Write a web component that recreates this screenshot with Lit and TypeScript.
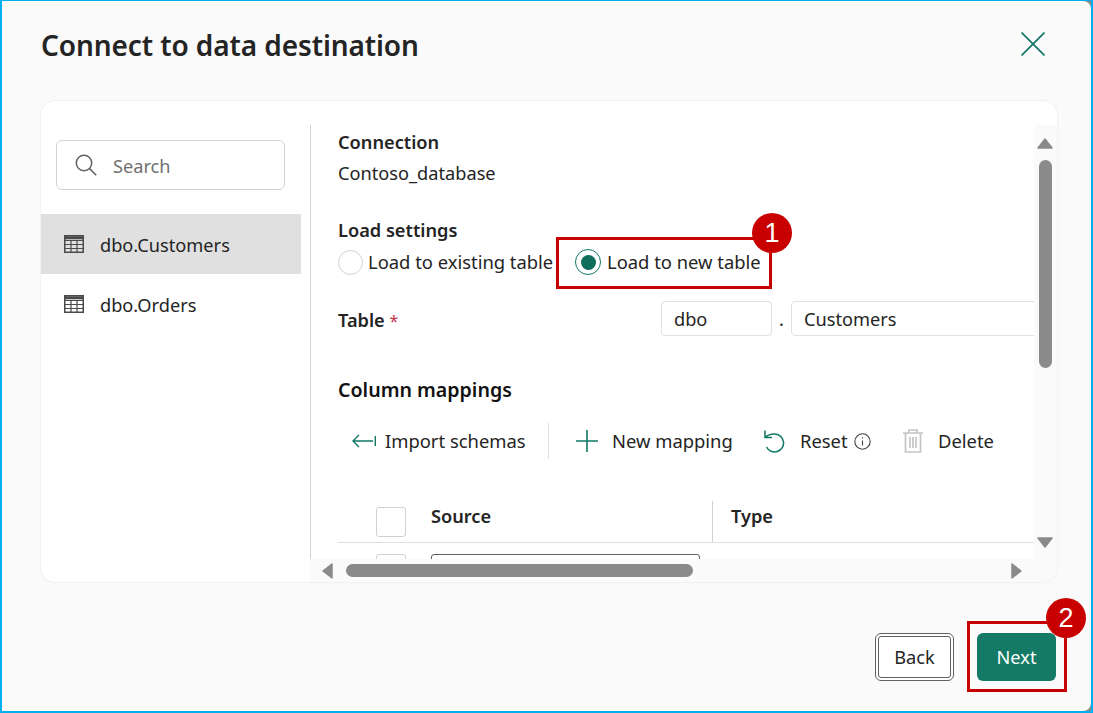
import { LitElement, css, html, svg } from 'lit';
import { customElement } from 'lit/decorators.js';

const tableIcon = html`
  <svg class="table-icon" viewBox="0 0 20 18" fill="none" stroke="#4a4a4a">
    <rect x="0.75" y="0.75" width="18.5" height="16.5" stroke-width="1.5" />
    <path d="M1 5.5h18M1 9.5h18M1 13.5h18M7 5v12M13 5v12" stroke-width="1.2" />
    <path d="M1 2.8h18" stroke-width="3" />
  </svg>
`;

const chevron = (d: string) => svg`<path d=${d} fill="#8a8a8a" stroke="#8a8a8a" stroke-width="1.5" stroke-linejoin="round" />`;

@customElement('app-root')
export class AppRoot extends LitElement {
  static styles = css`
    :host {
      display: block;
      width: 1093px;
      height: 713px;
      font-family: 'Noto Sans', 'Open Sans', sans-serif;
      font-size: 18.2px;
      line-height: 24px;
      color: #242424;
    }

    .frame {
      position: relative;
      box-sizing: border-box;
      width: 1093px;
      height: 713px;
      background: #8a8a8a;
      border: 2px solid #00b0f0;
      border-top-width: 1px;
    }

    .dialog {
      height: 100%;
      display: flex;
      flex-direction: column;
      background: #fafafa;
      border-radius: 0 8px 8px 0;
      overflow: hidden;
    }

    .header {
      height: 100px;
      flex: none;
      display: flex;
      align-items: flex-start;
      justify-content: space-between;
      padding: 25px 46px 0 39px;
      box-sizing: border-box;
    }

    h1 {
      margin: 0;
      font-size: 28px;
      line-height: 38px;
      font-weight: 600;
      letter-spacing: -0.1px;
    }

    .close {
      width: 24px;
      height: 24px;
      margin-top: 6px;
    }

    .card {
      margin: 0 34px 0 39px;
      height: 481px;
      flex: none;
      display: grid;
      grid-template-columns: 260px 1fr;
      background: #fff;
      border-radius: 14px;
      box-shadow: 0 0 2px rgba(0, 0, 0, 0.12);
      overflow: hidden;
    }

    .search {
      box-sizing: border-box;
      margin: 39px 0 24px 15px;
      width: 229px;
      height: 50px;
      display: flex;
      align-items: center;
      gap: 16px;
      padding: 1px 0 0 18px;
      border: 1px solid #d1d1d1;
      border-radius: 6px;
      color: #707070;
    }

    .search svg {
      width: 22px;
      height: 22px;
      flex: none;
      margin-top: -1px;
    }

    .row {
      height: 60px;
      display: flex;
      align-items: center;
      gap: 16px;
      padding-left: 23px;
    }

    .row span {
      padding-top: 2px;
    }

    .row.selected {
      background: #e0e0e0;
    }

    .table-icon {
      width: 20px;
      height: 18px;
      flex: none;
    }

    .main {
      display: grid;
      grid-template-columns: 1fr 23px;
      grid-template-rows: 1fr 23px;
      margin-top: 24px;
      margin-left: 9px;
      background: #fafafa;
      min-width: 0;
      min-height: 0;
    }

    .viewport {
      overflow: hidden;
      background: #fff;
      border-left: 1px solid #d1d1d1;
      padding: 5px 0 0 27px;
      min-width: 0;
      min-height: 0;
    }

    .strong {
      font-weight: 600;
    }

    .value {
      margin-top: 7px;
    }

    .load {
      margin-top: 33px;
    }

    .radios {
      display: flex;
      align-items: center;
      margin-top: 7px;
      height: 26px;
      font-size: 18.4px;
    }

    .radio {
      display: flex;
      align-items: center;
      gap: 5px;
      width: 237px;
      white-space: nowrap;
    }

    .circle {
      box-sizing: border-box;
      width: 25px;
      height: 25px;
      flex: none;
      border: 1px solid #d1d1d1;
      border-radius: 50%;
      display: grid;
      place-items: center;
    }

    .circle.on {
      width: 26px;
      height: 26px;
      margin-right: 1px;
      border-color: #117865;
    }

    .circle.on::after {
      content: '';
      width: 15px;
      height: 15px;
      border-radius: 50%;
      background: #0f6e5c;
    }

    .table-row {
      display: flex;
      align-items: center;
      margin-top: 26px;
      height: 35px;
    }

    .table-label {
      width: 323px;
      flex: none;
      padding-top: 4px;
    }

    .req {
      color: #c4314b;
      font-weight: 400;
      font-size: 16px;
    }

    .input {
      box-sizing: border-box;
      height: 35px;
      flex: none;
      border: 1px solid #e0e0e0;
      border-radius: 4px;
      padding: 1px 0 0 12px;
      display: flex;
      align-items: center;
    }

    .input.schema {
      width: 111px;
    }

    .input.name {
      width: 300px;
    }

    .dot {
      width: 19px;
      text-align: center;
      flex: none;
    }

    .mappings {
      margin-top: 42px;
      font-size: 19.6px;
      color: #111;
    }

    .toolbar {
      display: flex;
      align-items: center;
      height: 36px;
      margin-top: 21px;
      white-space: nowrap;
      font-size: 18.4px;
    }

    .tool {
      display: flex;
      align-items: center;
      flex: none;
    }

    .tool svg {
      flex: none;
    }

    .import {
      width: 210px;
      padding-left: 14px;
      box-sizing: border-box;
      gap: 9px;
    }

    .sep {
      width: 1px;
      height: 36px;
      background: #e0e0e0;
      flex: none;
    }

    .new {
      width: 215px;
      padding-left: 27px;
      box-sizing: border-box;
      gap: 14px;
    }

    .reset {
      width: 139px;
      gap: 12px;
    }

    .delete {
      gap: 15px;
    }

    .info {
      margin-left: -6px;
    }

    .columns {
      display: flex;
      align-items: center;
      height: 41px;
      margin-top: 42px;
      border-bottom: 1px solid #e0e0e0;
      width: 760px;
      font-weight: 600;
    }

    .check {
      box-sizing: border-box;
      width: 30px;
      height: 30px;
      flex: none;
      margin-left: 38px;
      border: 1px solid #d1d1d1;
      border-radius: 3px;
      background: #fff;
    }

    .source {
      box-sizing: border-box;
      width: 281px;
      margin-left: 25px;
      padding-bottom: 12px;
      flex: none;
    }

    .type {
      box-sizing: border-box;
      height: 41px;
      border-left: 1px solid #d1d1d1;
      padding: 0 0 12px 18px;
      display: flex;
      align-items: center;
    }

    .data-row {
      display: flex;
      margin-top: 11px;
    }

    .source-input {
      box-sizing: border-box;
      width: 269px;
      height: 30px;
      margin-left: 25px;
      border: 1px solid #616161;
      border-radius: 3px;
      flex: none;
    }

    .vbar {
      display: flex;
      flex-direction: column;
      align-items: center;
      padding: 13px 1px 0 0;
    }

    .vbar .thumb {
      width: 13px;
      height: 208px;
      margin: 11px 0 0 1px;
      border-radius: 7px;
      background: #8a8a8a;
    }

    .vbar .down {
      margin-top: auto;
      margin-bottom: 11px;
    }

    .hbar {
      display: flex;
      align-items: center;
      padding-left: 12px;
    }

    .hbar .thumb {
      height: 13px;
      width: 347px;
      margin-left: 13px;
      border-radius: 7px;
      background: #8a8a8a;
    }

    .hbar .right {
      margin-left: auto;
      margin-right: 12px;
    }

    .footer {
      display: flex;
      justify-content: flex-end;
      gap: 23px;
      padding: 51px 35px 0 0;
    }

    button {
      font: inherit;
      width: 79px;
      height: 48px;
      border-radius: 6px;
      box-sizing: border-box;
      padding: 0;
      color: inherit;
    }

    .back {
      background: #fff;
      border: 1px solid #616161;
      outline: 1px solid #616161;
      outline-offset: -4px;
    }

    .next {
      background: #147a66;
      color: #fff;
      border: none;
    }

    .mark {
      position: absolute;
      box-sizing: border-box;
      border: 3px solid #c80000;
    }

    .mark.one {
      left: 554px;
      top: 236px;
      width: 216px;
      height: 52px;
    }

    .mark.two {
      left: 965px;
      top: 620px;
      width: 100px;
      height: 71px;
    }

    .badge {
      position: absolute;
      width: 40px;
      height: 40px;
      border-radius: 50%;
      background: #c80000;
      color: #fff;
      font-family: 'Liberation Sans', sans-serif;
      font-size: 27px;
      line-height: 40px;
      text-align: center;
    }

    .badge.one {
      left: 750px;
      top: 212px;
    }

    .badge.two {
      left: 1044px;
      top: 597px;
    }
  `;

  render() {
    return html`
      <div class="frame">
        <div class="dialog">
          <header class="header">
            <h1>Connect to data destination</h1>
            <svg class="close" viewBox="0 0 24 24" fill="none" stroke="#117865" stroke-width="1.7">
              <path d="M0.5 0.5l23 23M23.5 0.5l-23 23" />
            </svg>
          </header>

          <section class="card">
            <aside>
              <div class="search">
                <svg viewBox="0 0 22 22" fill="none" stroke="#616161" stroke-width="1.5">
                  <circle cx="9" cy="9" r="7.7" />
                  <path d="M14.6 14.6l6.6 6.6" />
                </svg>
                Search
              </div>
              <div class="row selected">${tableIcon}<span>dbo.Customers</span></div>
              <div class="row">${tableIcon}<span>dbo.Orders</span></div>
            </aside>

            <div class="main">
              <div class="viewport">
                <div class="strong">Connection</div>
                <div class="value">Contoso_database</div>
                <div class="strong load">Load settings</div>
                <div class="radios">
                  <label class="radio"><span class="circle"></span>Load to existing table</label>
                  <label class="radio"><span class="circle on"></span>Load to new table</label>
                </div>
                <div class="table-row">
                  <div class="table-label strong">Table <span class="req">*</span></div>
                  <div class="input schema">dbo</div>
                  <div class="dot">.</div>
                  <div class="input name">Customers</div>
                </div>
                <div class="strong mappings">Column mappings</div>
                <div class="toolbar">
                  <div class="tool import">
                    <svg width="24" height="14" viewBox="0 0 24 14" fill="none" stroke="#117865" stroke-width="1.4">
                      <path d="M1 7h20M7 1L1 7l6 6M23.3 2v10" />
                    </svg>
                    Import schemas
                  </div>
                  <div class="sep"></div>
                  <div class="tool new">
                    <svg width="22" height="22" viewBox="0 0 22 22" fill="none" stroke="#117865" stroke-width="1.6">
                      <path d="M11 0v22M0 11h22" />
                    </svg>
                    New mapping
                  </div>
                  <div class="tool reset">
                    <svg width="24" height="24" viewBox="0 0 24 24" fill="none" stroke="#117865" stroke-width="1.5">
                      <path d="M1 1.5v7h7M1.5 8.3c2-2.2 4.5-3.3 9-3.3a9 9 0 1 1-8 13" />
                    </svg>
                    Reset
                    <svg class="info" width="17" height="17" viewBox="0 0 17 17" fill="none" stroke="#424242" stroke-width="1.1">
                      <circle cx="8.5" cy="8.5" r="7.7" />
                      <path d="M8.5 7.5v5M8.5 4.2v1.4" />
                    </svg>
                  </div>
                  <div class="tool delete">
                    <svg width="20" height="24" viewBox="0 0 20 24" fill="none" stroke="#c4c4c4" stroke-width="1.7">
                      <path d="M0 4h20M6 4V1h8v3M2.5 4v19h15V4M7 8v11M10 8v11M13 8v11" />
                    </svg>
                    Delete
                  </div>
                </div>
                <div class="columns">
                  <span class="check"></span>
                  <span class="source">Source</span>
                  <span class="type">Type</span>
                </div>
                <div class="data-row">
                  <span class="check"></span>
                  <span class="source-input"></span>
                </div>
              </div>

              <div class="vbar">
                <svg width="16" height="11" viewBox="0 0 16 11">${chevron('M8 1L15 10H1z')}</svg>
                <div class="thumb"></div>
                <svg class="down" width="16" height="11" viewBox="0 0 16 11">${chevron('M8 10L15 1H1z')}</svg>
              </div>

              <div class="hbar">
                <svg width="11" height="16" viewBox="0 0 11 16">${chevron('M1 8L10 1V15z')}</svg>
                <div class="thumb"></div>
                <svg class="right" width="11" height="16" viewBox="0 0 11 16">${chevron('M10 8L1 1V15z')}</svg>
              </div>
              <div></div>
            </div>
          </section>

          <footer class="footer">
            <button class="back">Back</button>
            <button class="next">Next</button>
          </footer>
        </div>

        <div class="mark one"></div>
        <div class="badge one">1</div>
        <div class="mark two"></div>
        <div class="badge two">2</div>
      </div>
    `;
  }
}
